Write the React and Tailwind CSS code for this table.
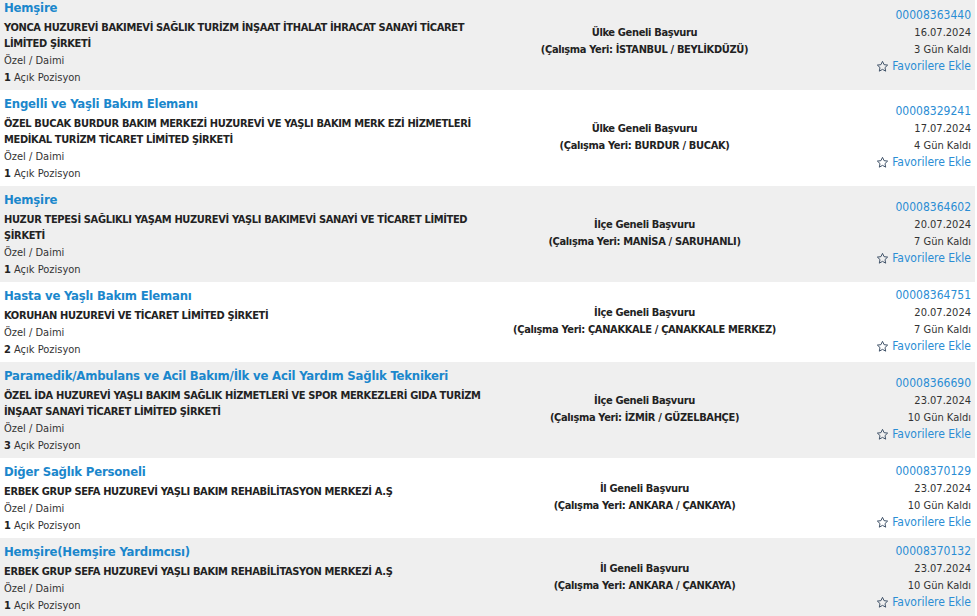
import React from "react";

const rows = [
  { t: "Hemşire", c: "YONCA HUZUREVİ BAKIMEVİ SAĞLIK TURİZM İNŞAAT İTHALAT İHRACAT SANAYİ TİCARET LİMİTED ŞİRKETİ", n: "1", a: "Ülke Geneli Başvuru", w: "(Çalışma Yeri: İSTANBUL / BEYLİKDÜZÜ)", id: "00008363440", d: "16.07.2024", k: "3 Gün Kaldı" },
  { t: "Engelli ve Yaşli Bakım Elemanı", c: "ÖZEL BUCAK BURDUR BAKIM MERKEZİ HUZUREVİ VE YAŞLI BAKIM MERK EZİ HİZMETLERİ MEDİKAL TURİZM TİCARET LİMİTED ŞİRKETİ", n: "1", a: "Ülke Geneli Başvuru", w: "(Çalışma Yeri: BURDUR / BUCAK)", id: "00008329241", d: "17.07.2024", k: "4 Gün Kaldı" },
  { t: "Hemşire", c: "HUZUR TEPESİ SAĞLIKLI YAŞAM HUZUREVİ YAŞLI BAKIMEVİ SANAYİ VE TİCARET LİMİTED ŞİRKETİ", n: "1", a: "İlçe Geneli Başvuru", w: "(Çalışma Yeri: MANİSA / SARUHANLI)", id: "00008364602", d: "20.07.2024", k: "7 Gün Kaldı" },
  { t: "Hasta ve Yaşlı Bakım Elemanı", c: "KORUHAN HUZUREVİ VE TİCARET LİMİTED ŞİRKETİ", n: "2", a: "İlçe Geneli Başvuru", w: "(Çalışma Yeri: ÇANAKKALE / ÇANAKKALE MERKEZ)", id: "00008364751", d: "20.07.2024", k: "7 Gün Kaldı" },
  { t: "Paramedik/Ambulans ve Acil Bakım/İlk ve Acil Yardım Sağlık Teknikeri", c: "ÖZEL İDA HUZUREVİ YAŞLI BAKIM SAĞLIK HİZMETLERİ VE SPOR MERKEZLERİ GIDA TURİZM İNŞAAT SANAYİ TİCARET LİMİTED ŞİRKETİ", n: "3", a: "İlçe Geneli Başvuru", w: "(Çalışma Yeri: İZMİR / GÜZELBAHÇE)", id: "00008366690", d: "23.07.2024", k: "10 Gün Kaldı" },
  { t: "Diğer Sağlık Personeli", c: "ERBEK GRUP SEFA HUZUREVİ YAŞLI BAKIM REHABİLİTASYON MERKEZİ A.Ş", n: "1", a: "İl Geneli Başvuru", w: "(Çalışma Yeri: ANKARA / ÇANKAYA)", id: "00008370129", d: "23.07.2024", k: "10 Gün Kaldı" },
  { t: "Hemşire(Hemşire Yardımcısı)", c: "ERBEK GRUP SEFA HUZUREVİ YAŞLI BAKIM REHABİLİTASYON MERKEZİ A.Ş", n: "1", a: "İl Geneli Başvuru", w: "(Çalışma Yeri: ANKARA / ÇANKAYA)", id: "00008370132", d: "23.07.2024", k: "10 Gün Kaldı" },
];

function StarIcon() {
  return (
    <svg width="13" height="13" viewBox="0 0 24 24" fill="none" stroke="#3d4f66" strokeWidth="1.8" strokeLinejoin="round">
      <path d="M12 2.5l2.9 6.1 6.6.8-4.9 4.6 1.3 6.6L12 17.3l-5.9 3.3 1.3-6.6-4.9-4.6 6.6-.8z" />
    </svg>
  );
}

export default function App() {
  return (
    <div className="w-[977px] h-[616px] overflow-hidden bg-white" style={{ fontFamily: '"DejaVu Sans Condensed", "DejaVu Sans", sans-serif' }}>
      <div className="w-[975px] -mt-[6px]">
        {rows.map((r, i) => (
          <div key={i} className={`flex ${i % 2 === 0 ? "bg-[#efefef]" : "bg-white"}`}>
            <div className="w-[490px] shrink-0 pl-[4px] pt-[5px] pb-[4px]">
              <div className="text-[13px] leading-[18px] font-bold tracking-[-0.2px] text-[#1b87cc] whitespace-nowrap">{r.t}</div>
              <div className="mt-[3px] text-[11px] leading-[16px] font-bold tracking-[-0.35px] text-[#222] pr-[8px]">{r.c}</div>
              <div className="text-[11px] leading-[17px] text-[#333]">Özel / Daimi</div>
              <div className="text-[11px] leading-[17px] text-[#333]"><span className="font-bold text-[#222]">{r.n}</span> Açık Pozisyon</div>
            </div>
            <div className="flex-1 flex flex-col items-center justify-center pb-[3px] text-[11px] leading-[17px] font-bold tracking-[-0.35px] text-[#222]">
              <div>{r.a}</div>
              <div>{r.w}</div>
            </div>
            <div className="w-[176px] shrink-0 flex flex-col items-end justify-center pr-[4px] pb-[2px]">
              <div className="text-[12px] leading-[17px] text-[#2a8dd4]">{r.id}</div>
              <div className="text-[11px] leading-[17px] text-[#333]">{r.d}</div>
              <div className="text-[11px] leading-[17px] text-[#333]">{r.k}</div>
              <div className="flex items-center gap-[3px] text-[12px] leading-[17px] text-[#2a8dd4]">
                <StarIcon />
                <span>Favorilere Ekle</span>
              </div>
            </div>
          </div>
        ))}
      </div>
    </div>
  );
}
